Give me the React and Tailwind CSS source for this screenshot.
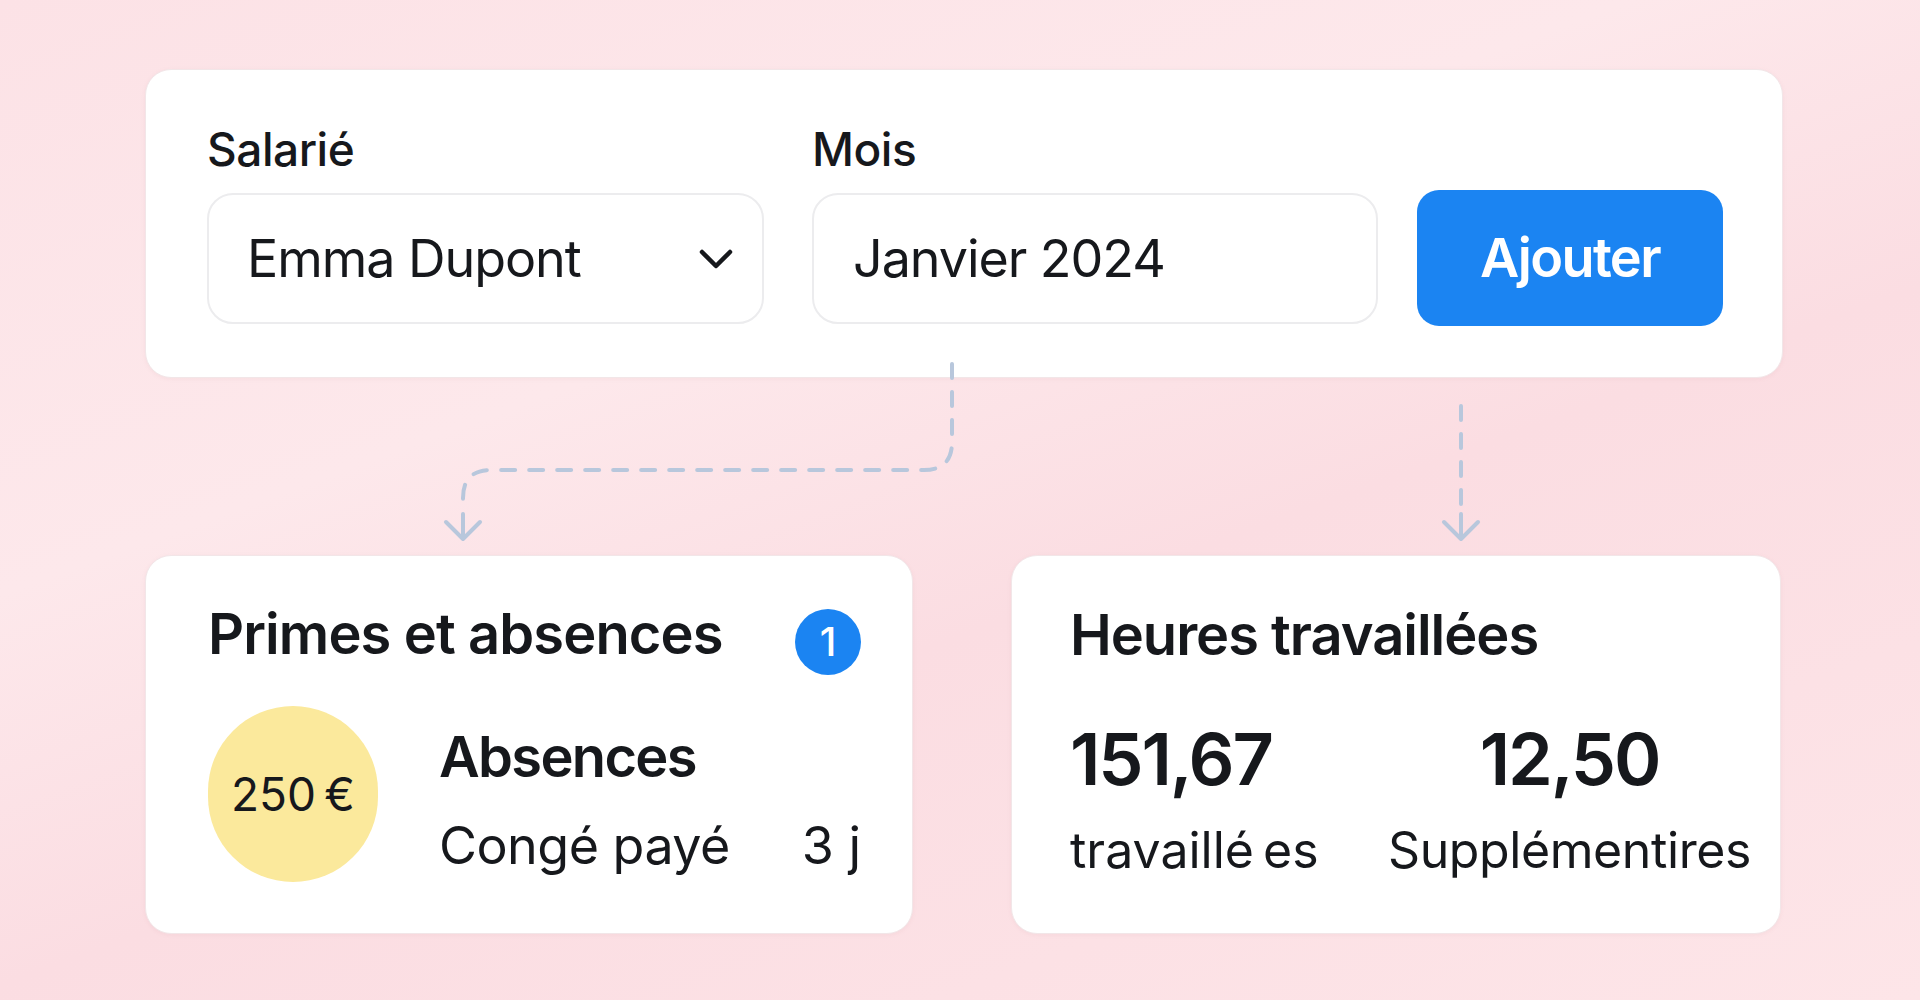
export default function App() {
  return (
    <div className="relative w-full h-[1000px] overflow-hidden bg-[linear-gradient(160deg,#fce2e6_0%,#fde8eb_35%,#fbdde2_58%,#fde5e8_100%)] font-[Inter,'Noto_Sans',sans-serif] text-[#16181c]">
      <div className="pl-[145px] pt-[69px]">
        {/* Top form card */}
        <div className="w-[1638px] h-[309px] rounded-[26px] bg-white border border-[#f2e6e8] shadow-[0_1px_4px_rgba(180,120,130,0.08)] pl-[61px] pr-[59px] pt-[56px] flex items-start">
          <div className="w-[557px]">
            <div className="text-[46px] leading-none font-medium tracking-[-0.01em]">Salarié</div>
            <div className="mt-[21px] h-[131px] rounded-[26px] border-2 border-[#ececee] flex items-center justify-between pl-[38px] pr-[29px]">
              <span className="text-[52px] leading-none tracking-[-0.02em]">Emma Dupont</span>
              <svg width="34" height="20" viewBox="0 0 34 20" fill="none">
                <polyline points="3,3 17,17 31,3" stroke="#16181c" strokeWidth="4.5" strokeLinecap="round" strokeLinejoin="round" />
              </svg>
            </div>
          </div>
          <div className="ml-[48px] w-[566px]">
            <div className="text-[46px] leading-none font-medium tracking-[-0.01em]">Mois</div>
            <div className="mt-[21px] h-[131px] rounded-[26px] border-2 border-[#ececee] flex items-center pl-[39px]">
              <span className="text-[52px] leading-none tracking-[-0.02em]">Janvier 2024</span>
            </div>
          </div>
          <button className="ml-[39px] mt-[64px] w-[306px] h-[136px] rounded-[22px] bg-[#1b84f2] text-white text-[54px] font-semibold leading-none tracking-[-0.03em] flex items-center justify-center">
            Ajouter
          </button>
        </div>

        {/* Bottom cards */}
        <div className="mt-[177px] flex gap-[98px]">
          <div className="w-[768px] h-[379px] rounded-[26px] bg-white border border-[#f2e6e8] shadow-[0_1px_4px_rgba(180,120,130,0.08)] pl-[62px] pr-[51px] pt-[50px]">
            <div className="flex items-start justify-between">
              <h2 className="text-[56px] leading-none font-semibold tracking-[-0.016em]">Primes et absences</h2>
              <div className="mt-[3px] w-[66px] h-[66px] rounded-full bg-[#1b84f2] text-white text-[40px] leading-none font-medium flex items-center justify-center">
                1
              </div>
            </div>
            <div className="mt-[31px] flex items-start">
              <div className="w-[170px] h-[176px] shrink-0 rounded-full bg-[#fbe99c] flex items-center justify-center text-[46px] leading-none">
                250{"\u2009"}€
              </div>
              <div className="ml-[61px] flex-1 pt-[23px]">
                <div className="text-[56px] leading-none font-semibold tracking-[-0.03em]">Absences</div>
                <div className="mt-[35px] flex items-center justify-between text-[52px] leading-none">
                  <span className="tracking-[-0.01em]">Congé payé</span>
                  <span>3 j</span>
                </div>
              </div>
            </div>
          </div>

          <div className="w-[770px] h-[379px] rounded-[26px] bg-white border border-[#f2e6e8] shadow-[0_1px_4px_rgba(180,120,130,0.08)] pl-[58px] pr-[29px] pt-[51px]">
            <h2 className="text-[56px] leading-none font-semibold tracking-[-0.018em]">Heures travaillées</h2>
            <div className="mt-[60px] flex justify-between">
              <div className="flex flex-col items-start">
                <span className="text-[72px] leading-none font-semibold tracking-[-0.03em]">151,67</span>
                <span className="mt-[30px] text-[50px] leading-none">travaillé{"\u2009"}es</span>
              </div>
              <div className="flex flex-col items-center">
                <span className="text-[72px] leading-none font-semibold tracking-[-0.03em]">12,50</span>
                <span className="mt-[30px] text-[50px] leading-none tracking-[-0.008em]">Supplémentires</span>
              </div>
            </div>
          </div>
        </div>
      </div>

      {/* Dashed connectors */}
      <svg className="absolute inset-0 pointer-events-none" width="1920" height="1000" viewBox="0 0 1920 1000" fill="none">
        <g stroke="#b8c7dc" strokeWidth="4" strokeLinecap="round" strokeLinejoin="round">
          <path d="M952 364 V442 Q952 470 924 470 H491 Q463 470 463 498 V504" strokeDasharray="14 14" />
          <path d="M463 514 V538 M446 522 L463 539 L480 522" />
          <path d="M1461 406 V504" strokeDasharray="14 14" />
          <path d="M1461 514 V538 M1444 522 L1461 539 L1478 522" />
        </g>
      </svg>
    </div>
  );
}
